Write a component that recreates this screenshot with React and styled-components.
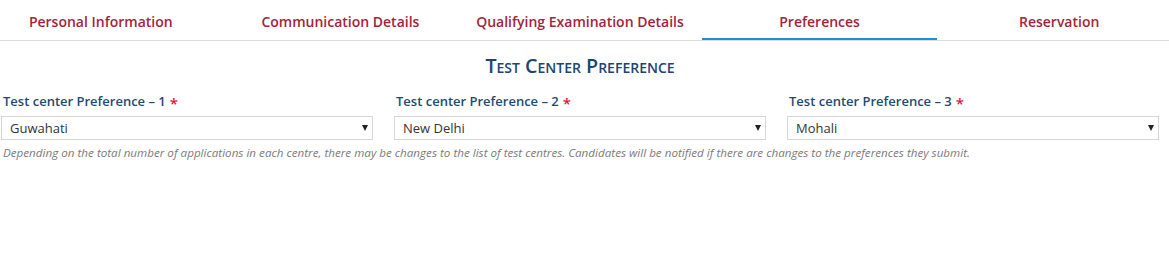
import styled, { createGlobalStyle } from "styled-components";

const GlobalStyle = createGlobalStyle`
  html, body {
    margin: 0;
    padding: 0;
    background: #fff;
    overflow-x: hidden;
  }
  body {
    font-family: "Open Sans", "Liberation Sans", sans-serif;
  }
`;

const Page = styled.div`
  width: 1169px;
  min-height: 268px;
`;

const TabBar = styled.div`
  border-bottom: 1px solid #dcdcdc;
  overflow: hidden;
`;

const Tabs = styled.nav`
  display: flex;
  margin: 0 -10px 0 -19px;
`;

const Tab = styled.div`
  position: relative;
  flex: 1;
  height: 40px;
  display: flex;
  align-items: center;
  justify-content: center;
  padding-top: 2px;
  box-sizing: border-box;
  font-size: 14px;
  font-weight: 600;
  color: #a3243b;

  &::after {
    content: "";
    display: ${(p) => (p.$active ? "block" : "none")};
    position: absolute;
    left: 2px;
    right: 2px;
    bottom: 0;
    height: 2px;
    background: #1a92d6;
  }
`;

const Title = styled.h2`
  margin: 12px 0 0;
  padding-right: 9px;
  text-align: center;
  font-size: 19.7px;
  font-weight: 600;
  font-variant: small-caps;
  color: #1b4573;
  line-height: 26px;
`;

const Fields = styled.div`
  display: grid;
  grid-template-columns: repeat(3, 372px);
  column-gap: 21px;
  padding: 0 0 0 1px;
  margin-top: 12px;
`;

const Field = styled.div`
  display: flex;
  flex-direction: column;
`;

const Label = styled.label`
  font-size: 13px;
  font-weight: 600;
  color: #1f4a73;
  padding-left: 2px;
  line-height: 20px;
  margin-bottom: 5px;
`;

const Star = styled.span`
  position: relative;
  top: 3px;
  color: #e5173a;
  margin-left: 4px;
  font-size: 15px;
  line-height: 0;
`;

const Select = styled.div`
  height: 24px;
  box-sizing: border-box;
  border: 1px solid #d6d6d6;
  display: flex;
  align-items: center;
  justify-content: space-between;
  padding: 0 4px 0 8px;
  font-size: 13px;
  color: #333;
`;

const Arrow = styled.span`
  width: 0;
  height: 0;
  border-left: 3px solid transparent;
  border-right: 3px solid transparent;
  border-top: 6px solid #222;
`;

const Note = styled.p`
  margin: 5px 0 0 3px;
  font-size: 11.65px;
  font-style: italic;
  color: #7a7a7a;
`;

const tabs = [
  "Personal Information",
  "Communication Details",
  "Qualifying Examination Details",
  "Preferences",
  "Reservation",
];

const prefs = ["Guwahati", "New Delhi", "Mohali"];

export default function App() {
  return (
    <Page>
      <GlobalStyle />
      <TabBar>
        <Tabs>
          {tabs.map((t) => (
            <Tab key={t} $active={t === "Preferences"}>
              {t}
            </Tab>
          ))}
        </Tabs>
      </TabBar>
      <Title>Test Center Preference</Title>
      <Fields>
        {prefs.map((city, i) => (
          <Field key={city}>
            <Label>
              Test center Preference – {i + 1}
              <Star>*</Star>
            </Label>
            <Select>
              <span>{city}</span>
              <Arrow />
            </Select>
          </Field>
        ))}
      </Fields>
      <Note>
        Depending on the total number of applications in each centre, there may be changes to the list of test
        centres. Candidates will be notified if there are changes to the preferences they submit.
      </Note>
    </Page>
  );
}
